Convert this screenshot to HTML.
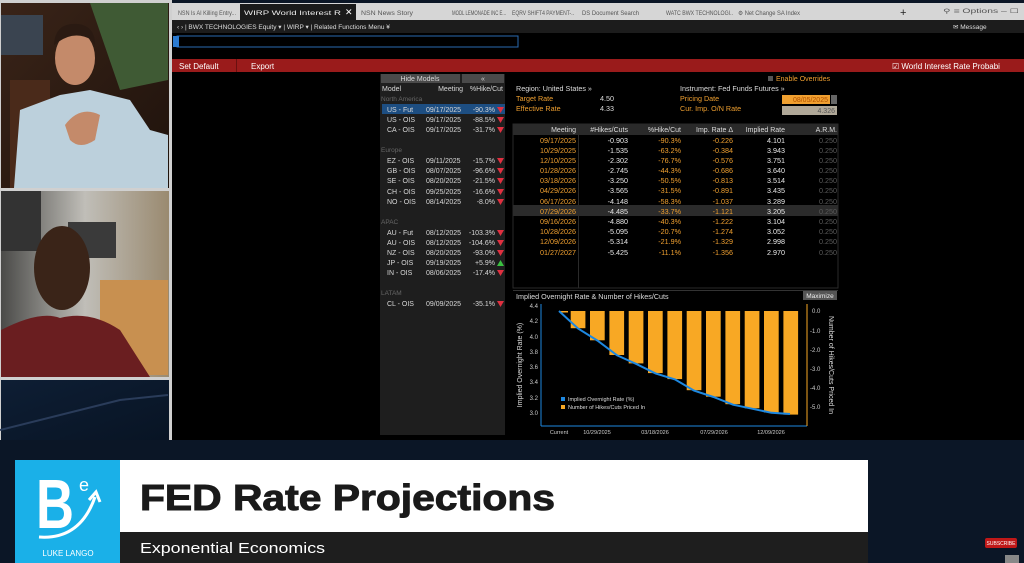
<!DOCTYPE html>
<html><head><meta charset="utf-8"><style>
html,body{margin:0;padding:0;background:#0b1626;width:1024px;height:563px;overflow:hidden}
svg{display:block}
text{font-family:"Liberation Sans",sans-serif}
.s{font-size:7px;fill:#d8d8d8}
.o{fill:#f0a030}
.g{fill:#777}
.h{fill:#999}
</style></head><body>
<svg width="1024" height="563" viewBox="0 0 1024 563" xmlns="http://www.w3.org/2000/svg">
<defs>
<linearGradient id="bg1" x1="0" y1="0" x2="1" y2="1"><stop offset="0" stop-color="#3a2418"/><stop offset="1" stop-color="#1e120c"/></linearGradient>
<linearGradient id="bg2" x1="0" y1="0" x2="1" y2="0"><stop offset="0" stop-color="#4a4a48"/><stop offset=".5" stop-color="#c0beb8"/><stop offset="1" stop-color="#9a8a70"/></linearGradient>
<linearGradient id="bg3" x1="0" y1="0" x2="1" y2="1"><stop offset="0" stop-color="#0e1e34"/><stop offset="1" stop-color="#081424"/></linearGradient>
</defs>
<rect width="1024" height="563" fill="#0b1626"/>
<!-- left videos -->
<rect x="0" y="0" width="172" height="442" fill="#d0d0d0"/>
<rect x="1" y="3" width="168" height="185" fill="url(#bg1)"/>
<rect x="1" y="15" width="42" height="40" fill="#3a4450"/>
<path d="M90 3 L168 3 L168 80 L120 90 Z" fill="#3f5a34"/>
<rect x="10" y="80" width="40" height="108" fill="#4a2a1a"/>
<path d="M14 188 L20 110 L60 95 L90 90 L130 100 L150 130 L168 135 L168 188 Z" fill="#bcd0dc"/>
<ellipse cx="75" cy="58" rx="20" ry="27" fill="#c48a6a"/>
<path d="M54 45 Q55 22 78 24 Q95 26 95 45 L92 40 Q75 30 58 42 Z" fill="#2a1a12"/>
<path d="M65 125 Q80 105 100 115 L95 140 Q80 150 70 140 Z" fill="#c48a6a"/>
<rect x="1" y="191" width="168" height="186" fill="url(#bg2)"/>
<rect x="1" y="191" width="40" height="60" fill="#333"/>
<rect x="68" y="222" width="48" height="36" fill="#3a3a3a"/>
<rect x="100" y="280" width="68" height="95" fill="#c89050"/>
<path d="M1 377 L1 330 Q40 310 60 318 Q90 310 120 330 L150 377 Z" fill="#6a1e20"/>
<ellipse cx="62" cy="268" rx="28" ry="42" fill="#3a2418"/>
<rect x="1" y="380" width="168" height="60" fill="url(#bg3)"/>
<path d="M0 430 L120 400 L168 395" stroke="#2a3c5a" stroke-width="2" fill="none"/>
<!-- bloomberg frame -->
<rect x="172" y="3" width="852" height="437" fill="#000"/>
<rect x="172" y="3" width="852" height="17" fill="#d6d6d6"/>
<rect x="240" y="4" width="116" height="16" fill="#1a1a1a"/>
<g font-size="6" fill="#555">
<text x="178" y="15" textLength="58" lengthAdjust="spacingAndGlyphs">NSN Is AI Killing Entry...</text>
<text x="244" y="15" fill="#eee" textLength="97" lengthAdjust="spacingAndGlyphs">WIRP World Interest R</text>
<text x="345" y="15" fill="#fff" font-size="9">✕</text>
<text x="361" y="15" textLength="52" lengthAdjust="spacingAndGlyphs">NSN News Story</text>
<text x="452" y="15" textLength="54" lengthAdjust="spacingAndGlyphs">MODL LEMONADE INC E...</text>
<text x="512" y="15" textLength="62" lengthAdjust="spacingAndGlyphs">EQRV SHIFT4 PAYMENT-..</text>
<text x="582" y="15" textLength="57" lengthAdjust="spacingAndGlyphs">DS Document Search</text>
<text x="666" y="15" textLength="67" lengthAdjust="spacingAndGlyphs">WATC BWX TECHNOLOGI..</text>
<text x="738" y="15" textLength="62" lengthAdjust="spacingAndGlyphs">⚙ Net Change SA Index</text>
<text x="900" y="16" font-size="11" fill="#222">+</text>
<text x="943" y="13" textLength="76" lengthAdjust="spacingAndGlyphs">⚲ ≡ Options  –  ☐</text>
</g>
<rect x="172" y="20" width="852" height="13" fill="#1c1c1c"/>
<g font-size="6.5" fill="#ddd">
<text x="177" y="29">‹  ›  | BWX TECHNOLOGIES Equity ▾ | WIRP ▾ | Related Functions Menu ¥</text>
<text x="953" y="29">✉ Message</text>
</g>
<rect x="177" y="36" width="341" height="11" fill="#000" stroke="#2a6ab0" stroke-width="1"/>
<rect x="173" y="36" width="6" height="11" fill="#2a7ad0"/>
<rect x="172" y="59" width="852" height="13" fill="#9a1b1b"/>
<rect x="236" y="59" width="1" height="13" fill="#6a1010"/>
<g font-size="8" fill="#fff">
<text x="179" y="69">Set Default</text>
<text x="251" y="69">Export</text>
<text x="892" y="69">☑ World Interest Rate Probabi</text>
</g>
<!-- left panel -->
<rect x="380" y="74" width="125" height="361" fill="#1e1e1e"/>
<rect x="381" y="74" width="79" height="9" fill="#4a4a4a"/>
<rect x="462" y="74" width="42" height="9" fill="#4a4a4a"/>
<text x="420" y="81" class="s" text-anchor="middle" fill="#eee">Hide Models</text>
<text x="483" y="81" class="s" text-anchor="middle">«</text>
<g class="s">
<text x="382" y="91">Model</text><text x="463" y="91" text-anchor="end">Meeting</text><text x="503" y="91" text-anchor="end">%Hike/Cut</text>
</g>
<g font-size="6.5" class="g"><text x="381" y="101" fill="#666">North America</text><text x="381" y="152" fill="#666">Europe</text><text x="381" y="224" fill="#666">APAC</text><text x="381" y="295" fill="#666">LATAM</text></g>
<rect x="382" y="104" width="123" height="10" fill="#1d4e82"/>
<g class="s">
<text x="387" y="112">US - Fut</text><text x="426" y="112">09/17/2025</text><text x="495" y="112" text-anchor="end">-90.3%</text>
<text x="387" y="122">US - OIS</text><text x="426" y="122">09/17/2025</text><text x="495" y="122" text-anchor="end">-88.5%</text>
<text x="387" y="132">CA - OIS</text><text x="426" y="132">09/17/2025</text><text x="495" y="132" text-anchor="end">-31.7%</text>
<text x="387" y="163">EZ - OIS</text><text x="426" y="163">09/11/2025</text><text x="495" y="163" text-anchor="end">-15.7%</text>
<text x="387" y="173">GB - OIS</text><text x="426" y="173">08/07/2025</text><text x="495" y="173" text-anchor="end">-96.6%</text>
<text x="387" y="183">SE - OIS</text><text x="426" y="183">08/20/2025</text><text x="495" y="183" text-anchor="end">-21.5%</text>
<text x="387" y="194">CH - OIS</text><text x="426" y="194">09/25/2025</text><text x="495" y="194" text-anchor="end">-16.6%</text>
<text x="387" y="204">NO - OIS</text><text x="426" y="204">08/14/2025</text><text x="495" y="204" text-anchor="end">-8.0%</text>
<text x="387" y="235">AU - Fut</text><text x="426" y="235">08/12/2025</text><text x="495" y="235" text-anchor="end">-103.3%</text>
<text x="387" y="245">AU - OIS</text><text x="426" y="245">08/12/2025</text><text x="495" y="245" text-anchor="end">-104.6%</text>
<text x="387" y="255">NZ - OIS</text><text x="426" y="255">08/20/2025</text><text x="495" y="255" text-anchor="end">-93.0%</text>
<text x="387" y="265">JP - OIS</text><text x="426" y="265">09/19/2025</text><text x="495" y="265" text-anchor="end">+5.9%</text>
<text x="387" y="275">IN - OIS</text><text x="426" y="275">08/06/2025</text><text x="495" y="275" text-anchor="end">-17.4%</text>
<text x="387" y="306">CL - OIS</text><text x="426" y="306">09/09/2025</text><text x="495" y="306" text-anchor="end">-35.1%</text>
</g>
<g fill="#e03040">
<path d="M497 107h7l-3.5 6z"/><path d="M497 117h7l-3.5 6z"/><path d="M497 127h7l-3.5 6z"/>
<path d="M497 158h7l-3.5 6z"/><path d="M497 168h7l-3.5 6z"/><path d="M497 178h7l-3.5 6z"/><path d="M497 189h7l-3.5 6z"/><path d="M497 199h7l-3.5 6z"/>
<path d="M497 230h7l-3.5 6z"/><path d="M497 240h7l-3.5 6z"/><path d="M497 250h7l-3.5 6z"/><path d="M497 270h7l-3.5 6z"/>
<path d="M497 301h7l-3.5 6z"/>
</g>
<path d="M497 266h7l-3.5-6z" fill="#3ac040"/>
<!-- top info -->
<rect x="768" y="76" width="5" height="5" fill="#555"/>
<text x="776" y="81" font-size="7" class="o">Enable Overrides</text>
<g font-size="7.2">
<text x="516" y="91" fill="#ddd">Region: United States »</text>
<text x="516" y="101" class="o">Target Rate</text><text x="614" y="101" text-anchor="end" fill="#ddd">4.50</text>
<text x="516" y="111" class="o">Effective Rate</text><text x="614" y="111" text-anchor="end" fill="#ddd">4.33</text>
<text x="680" y="91" fill="#ddd">Instrument: Fed Funds Futures »</text>
<text x="680" y="101" class="o">Pricing Date</text>
<text x="680" y="111" class="o">Cur. Imp. O/N Rate</text>
</g>
<rect x="782" y="95" width="48" height="9" fill="#f0a030"/>
<text x="828" y="102" font-size="7" text-anchor="end" fill="#b05000">08/05/2025</text>
<rect x="831" y="95" width="6" height="9" fill="#666"/>
<rect x="782" y="106" width="55" height="9" fill="#b0a898"/>
<text x="835" y="113" font-size="7" text-anchor="end" fill="#555">4.326</text>
<!-- table -->
<rect x="513" y="124" width="325" height="164" fill="#000" stroke="#2a2a2a"/>
<rect x="513" y="124" width="325" height="11" fill="#2a2a2a"/>
<rect x="578" y="135" width="1" height="153" fill="#2a2a2a"/>
<rect x="513" y="205" width="325" height="11" fill="#2b2b2b"/>
<g font-size="7" fill="#ddd" text-anchor="end">
<text x="576" y="132">Meeting</text><text x="628" y="132">#Hikes/Cuts</text><text x="681" y="132">%Hike/Cut</text><text x="733" y="132">Imp. Rate Δ</text><text x="785" y="132">Implied Rate</text><text x="837" y="132">A.R.M.</text>
</g>
<g font-size="7.2" text-anchor="end">
<g class="o">
<text x="576" y="143">09/17/2025</text><text x="576" y="153">10/29/2025</text><text x="576" y="163">12/10/2025</text><text x="576" y="173">01/28/2026</text><text x="576" y="183">03/18/2026</text><text x="576" y="193">04/29/2026</text><text x="576" y="204">06/17/2026</text><text x="576" y="214">07/29/2026</text><text x="576" y="224">09/16/2026</text><text x="576" y="234">10/28/2026</text><text x="576" y="244">12/09/2026</text><text x="576" y="255">01/27/2027</text>
</g>
<g fill="#e8e8e8">
<text x="628" y="143">-0.903</text><text x="628" y="153">-1.535</text><text x="628" y="163">-2.302</text><text x="628" y="173">-2.745</text><text x="628" y="183">-3.250</text><text x="628" y="193">-3.565</text><text x="628" y="204">-4.148</text><text x="628" y="214">-4.485</text><text x="628" y="224">-4.880</text><text x="628" y="234">-5.095</text><text x="628" y="244">-5.314</text><text x="628" y="255">-5.425</text>
</g>
<g class="o">
<text x="681" y="143">-90.3%</text><text x="681" y="153">-63.2%</text><text x="681" y="163">-76.7%</text><text x="681" y="173">-44.3%</text><text x="681" y="183">-50.5%</text><text x="681" y="193">-31.5%</text><text x="681" y="204">-58.3%</text><text x="681" y="214">-33.7%</text><text x="681" y="224">-40.3%</text><text x="681" y="234">-20.7%</text><text x="681" y="244">-21.9%</text><text x="681" y="255">-11.1%</text>
</g>
<g class="o">
<text x="733" y="143">-0.226</text><text x="733" y="153">-0.384</text><text x="733" y="163">-0.576</text><text x="733" y="173">-0.686</text><text x="733" y="183">-0.813</text><text x="733" y="193">-0.891</text><text x="733" y="204">-1.037</text><text x="733" y="214">-1.121</text><text x="733" y="224">-1.222</text><text x="733" y="234">-1.274</text><text x="733" y="244">-1.329</text><text x="733" y="255">-1.356</text>
</g>
<g fill="#e8e8e8">
<text x="785" y="143">4.101</text><text x="785" y="153">3.943</text><text x="785" y="163">3.751</text><text x="785" y="173">3.640</text><text x="785" y="183">3.514</text><text x="785" y="193">3.435</text><text x="785" y="204">3.289</text><text x="785" y="214">3.205</text><text x="785" y="224">3.104</text><text x="785" y="234">3.052</text><text x="785" y="244">2.998</text><text x="785" y="255">2.970</text>
</g>
<g fill="#5a5a5a">
<text x="837" y="143">0.250</text><text x="837" y="153">0.250</text><text x="837" y="163">0.250</text><text x="837" y="173">0.250</text><text x="837" y="183">0.250</text><text x="837" y="193">0.250</text><text x="837" y="204">0.250</text><text x="837" y="214">0.250</text><text x="837" y="224">0.250</text><text x="837" y="234">0.250</text><text x="837" y="244">0.250</text><text x="837" y="255">0.250</text>
</g>
</g>
<!-- chart -->
<rect x="513" y="290" width="325" height="145" fill="#000"/>
<rect x="513" y="290" width="325" height="1" fill="#333"/>
<text x="516" y="299" font-size="7.2" fill="#ddd">Implied Overnight Rate &amp; Number of Hikes/Cuts</text>
<rect x="803" y="291" width="34" height="9" fill="#555"/>
<text x="820" y="298" font-size="6.5" text-anchor="middle" fill="#eee">Maximize</text>
<g fill="#f8a824">
<rect x="560" y="311" width="8" height="1.5"/>
<rect x="570.7" y="311" width="14.7" height="17.2"/>
<rect x="590" y="311" width="14.7" height="29.3"/>
<rect x="609.4" y="311" width="14.7" height="44"/>
<rect x="628.7" y="311" width="14.7" height="52.4"/>
<rect x="648" y="311" width="14.7" height="62.1"/>
<rect x="667.4" y="311" width="14.7" height="68.1"/>
<rect x="686.7" y="311" width="14.7" height="79.2"/>
<rect x="706" y="311" width="14.7" height="85.7"/>
<rect x="725.4" y="311" width="14.7" height="93.2"/>
<rect x="744.7" y="311" width="14.7" height="97.3"/>
<rect x="764" y="311" width="14.7" height="101.5"/>
<rect x="783.4" y="311" width="14.7" height="103.6"/>
</g>
<polyline fill="none" stroke="#1e88e0" stroke-width="2" points="559,311 578,328.5 597.5,340.6 617,355.3 636,363.8 655.5,373.4 675,379.4 694,390.6 713.5,397 733,404.7 752,408.7 771.5,412.8 790,414"/>
<line x1="541" y1="304" x2="541" y2="426" stroke="#1e88e0" stroke-width="1"/>
<line x1="541" y1="426" x2="807" y2="426" stroke="#1e88e0" stroke-width="1"/>
<line x1="807" y1="304" x2="807" y2="426" stroke="#f8a824" stroke-width="1"/>
<g font-size="6" fill="#ccc" text-anchor="end">
<text x="538" y="308">4.4</text><text x="538" y="323">4.2</text><text x="538" y="339">4.0</text><text x="538" y="354">3.8</text><text x="538" y="369">3.6</text><text x="538" y="384">3.4</text><text x="538" y="400">3.2</text><text x="538" y="415">3.0</text>
</g>
<g font-size="6" fill="#ccc">
<text x="812" y="313">0.0</text><text x="810" y="333">-1.0</text><text x="810" y="352">-2.0</text><text x="810" y="371">-3.0</text><text x="810" y="390">-4.0</text><text x="810" y="409">-5.0</text>
</g>
<g font-size="5.5" fill="#ccc" text-anchor="middle">
<text x="559" y="434">Current</text><text x="597" y="434">10/29/2025</text><text x="655" y="434">03/18/2026</text><text x="714" y="434">07/29/2026</text><text x="771" y="434">12/09/2026</text>
</g>
<text transform="translate(522,365) rotate(-90)" font-size="7" fill="#ddd" text-anchor="middle">Implied Overnight Rate (%)</text>
<text transform="translate(829,365) rotate(90)" font-size="7" fill="#ddd" text-anchor="middle">Number of Hikes/Cuts Priced In</text>
<rect x="561" y="397" width="4" height="4" fill="#1e88e0"/><text x="568" y="401" font-size="5.5" fill="#ddd">Implied Overnight Rate (%)</text>
<rect x="561" y="405" width="4" height="4" fill="#f8a824"/><text x="568" y="409" font-size="5.5" fill="#ddd">Number of Hikes/Cuts Priced In</text>
<!-- lower third -->
<rect x="0" y="440" width="1024" height="123" fill="#0b1626"/>
<rect x="15" y="460" width="105" height="103" fill="#1ab0e8"/>
<text x="36" y="528" font-size="70" font-weight="bold" fill="#fff" textLength="38" lengthAdjust="spacingAndGlyphs">B</text>
<text x="79" y="491" font-size="18" fill="#fff">e</text>
<path d="M39 537 Q80 540 95 497" stroke="#fff" stroke-width="3" fill="none"/>
<path d="M89 500 L96 492 L100 502" stroke="#fff" stroke-width="3" fill="none"/>
<text x="68" y="556" font-size="8" fill="#fff" text-anchor="middle">LUKE LANGO</text>
<rect x="120" y="460" width="748" height="72" fill="#fff"/>
<text x="140" y="510" font-size="36" font-weight="bold" fill="#1a1a1a" stroke="#1a1a1a" stroke-width="1" textLength="415" lengthAdjust="spacingAndGlyphs">FED Rate Projections</text>
<rect x="120" y="532" width="748" height="31" fill="#1e1e1e"/>
<text x="140" y="553" font-size="15" fill="#fff" textLength="185" lengthAdjust="spacingAndGlyphs">Exponential Economics</text>
<rect x="985" y="538" width="32" height="10" rx="2" fill="#c01818"/>
<text x="1001" y="545" font-size="5" fill="#fff" text-anchor="middle">SUBSCRIBE</text>
<rect x="1005" y="555" width="14" height="8" fill="#888"/>
</svg>
</body></html>
